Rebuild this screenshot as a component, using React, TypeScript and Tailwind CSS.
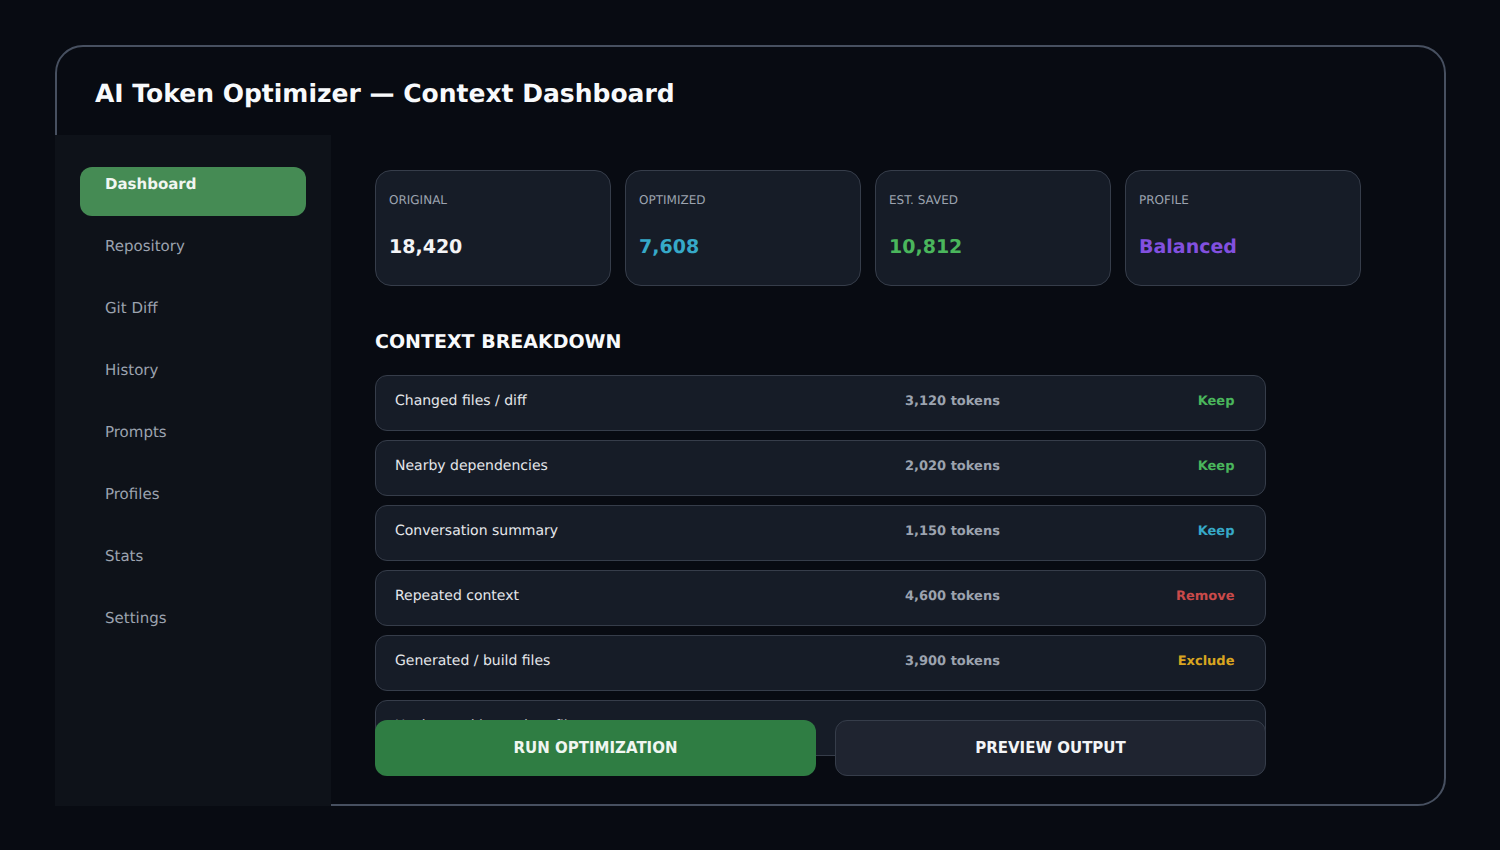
const nav = ["Repository", "Git Diff", "History", "Prompts", "Profiles", "Stats", "Settings"];

const stats = [
  { label: "ORIGINAL", value: "18,420", color: "text-[#f3f4f6]" },
  { label: "OPTIMIZED", value: "7,608", color: "text-[#36a9c8]" },
  { label: "EST. SAVED", value: "10,812", color: "text-[#4ab65c]" },
  { label: "PROFILE", value: "Balanced", color: "text-[#8250df]" },
];

const rows = [
  { name: "Changed files / diff", tokens: "3,120 tokens", action: "Keep", color: "text-[#4ab65c]" },
  { name: "Nearby dependencies", tokens: "2,020 tokens", action: "Keep", color: "text-[#4ab65c]" },
  { name: "Conversation summary", tokens: "1,150 tokens", action: "Keep", color: "text-[#36a9c8]" },
  { name: "Repeated context", tokens: "4,600 tokens", action: "Remove", color: "text-[#c94a4a]" },
  { name: "Generated / build files", tokens: "3,900 tokens", action: "Exclude", color: "text-[#d9a520]" },
  { name: "Unchanged large data files", tokens: "2,630 tokens", action: "Exclude", color: "text-[#d9a520]" },
];

export default function App() {
  return (
    <div className="h-[850px] overflow-hidden bg-[#080b12] pl-[55px] pt-[45px] font-['DejaVu_Sans',sans-serif] antialiased [text-rendering:geometricPrecision]">
      <div className="relative h-[761px] w-[1391px] rounded-[28px] border-2 border-[#475060] bg-[#080b12]">
        <header className="flex h-[88px] items-center pl-[38px] pt-[6px]">
          <h1 className="text-[25px] font-bold text-[#f8fafc]">AI Token Optimizer — Context Dashboard</h1>
        </header>

        <div className="flex">
          <aside className="-ml-[2px] flex h-[671px] w-[276px] shrink-0 flex-col bg-[#0e1219] px-[25px] pt-[32px]">
            <div className="h-[49px] w-[226px] rounded-[12px] bg-[#458b54] pl-[25px] pt-[7px] text-[15px] font-bold leading-[20px] text-[#f0f6f1]">
              Dashboard
            </div>
            <nav className="flex flex-col">
              {nav.map((item) => (
                <div key={item} className="h-[62px] pl-[25px] pt-[20px] text-[15px] leading-[21px] text-[#9ca3af]">
                  {item}
                </div>
              ))}
            </nav>
          </aside>

          <main className="pl-[44px] pt-[35px]">
            <div className="flex gap-[14px]">
              {stats.map((stat) => (
                <div key={stat.label} className="h-[116px] w-[236px] rounded-[16px] border border-[#363d4a] bg-[#161c27] pl-[13px] pt-[21px]">
                  <div className="text-[12px] leading-[16px] text-[#9ca3af]">{stat.label}</div>
                  <div className={`mt-[26px] text-[19px] font-bold leading-[26px] ${stat.color}`}>{stat.value}</div>
                </div>
              ))}
            </div>

            <h2 className="mt-[44px] text-[19px] font-bold leading-[24px] text-[#f8fafc]">CONTEXT BREAKDOWN</h2>

            <div className="mt-[21px] flex h-[381px] w-[891px] flex-col gap-[9px] overflow-hidden">
              {rows.map((row) => (
                <div key={row.name} className="flex h-[56px] shrink-0 rounded-[12px] border border-[#363d4a] bg-[#161c27] pl-[19px] pt-[15px]">
                  <div className="w-[510px] text-[14px] leading-[20px] text-[#e5e7eb]">{row.name}</div>
                  <div className="w-[200px] pt-[1px] text-[13px] font-bold leading-[20px] text-[#9ca3af]">{row.tokens}</div>
                  <div className={`w-[129.5px] pt-[1px] text-right text-[13px] font-bold leading-[20px] ${row.color}`}>{row.action}</div>
                </div>
              ))}
            </div>
          </main>
        </div>

        <div className="absolute left-[318px] top-[673px] flex w-[891px] gap-[19px]">
          <button className="h-[56px] w-[441px] rounded-[12px] bg-[#2f7d43] text-[15px] font-bold text-[#f0f6f1]">RUN OPTIMIZATION</button>
          <button className="h-[56px] w-[431px] rounded-[12px] border border-[#363d4a] bg-[#1f2430] text-[15px] font-bold text-[#f3f4f6]">PREVIEW OUTPUT</button>
        </div>
      </div>
    </div>
  );
}
